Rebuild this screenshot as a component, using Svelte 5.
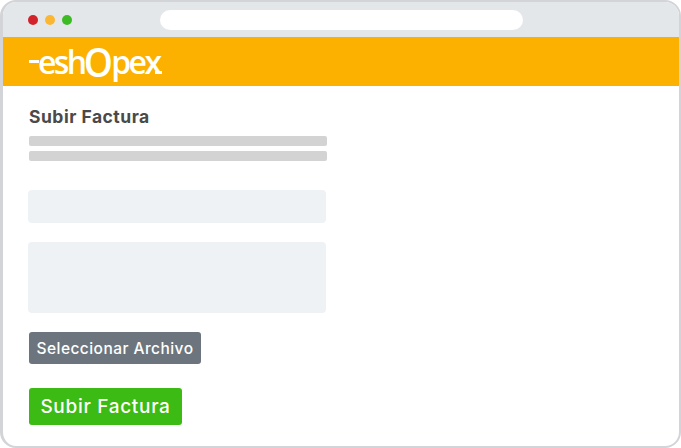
<script>
	const lines = [0, 1];
</script>

<div class="window">
	<div class="chrome">
		<div class="dots">
			<span class="dot red"></span>
			<span class="dot amber"></span>
			<span class="dot green"></span>
		</div>
		<div class="address"></div>
	</div>
	<header class="brand">
		<div class="logo"><span class="dash"></span><span>esh</span><span class="big">O</span><span>pex</span><span class="tail"></span></div>
	</header>
	<main class="content">
		<h1>Subir Factura</h1>
		<div class="lines">
			{#each lines as l}
				<div class="line"></div>
			{/each}
		</div>
		<div class="input"></div>
		<div class="textarea"></div>
		<button class="file">Seleccionar Archivo</button>
		<button class="submit">Subir Factura</button>
	</main>
</div>

<style>
	:global(body) {
		background: #fff;
	}
	.window {
		box-sizing: border-box;
		width: 681px;
		height: 448px;
		border: 2px solid #d2d4d7;
		border-left-width: 3px;
		border-radius: 16px;
		overflow: hidden;
		background: #fff;
		font-family: Inter, "Open Sans", sans-serif;
	}
	.chrome {
		height: 35px;
		background: #e4e7ea;
		display: flex;
		align-items: center;
		padding: 0 0 0 25px;
	}
	.dots {
		display: flex;
		gap: 7px;
		width: 132px;
	}
	.dot {
		width: 10px;
		height: 10px;
		border-radius: 50%;
	}
	.red { background: #d2232a; }
	.amber { background: #fbb732; }
	.green { background: #3dbb25; }
	.address {
		width: 363px;
		height: 20px;
		background: #fff;
		border-radius: 10px;
	}
	.brand {
		height: 49px;
		background: #fcb100;
		padding-left: 26px;
		display: flex;
		align-items: center;
	}
	.logo {
		display: flex;
		align-items: center;
		color: #fff;
		font-family: "Open Sans", sans-serif;
		font-size: 32px;
		font-weight: 600;
		letter-spacing: -2.6px;
		line-height: 1;
	}
	.dash {
		width: 10px;
		height: 3px;
		background: #fff;
		margin-right: -1px;
	}
	.big {
		font-size: 39px;
		font-weight: 600;
		letter-spacing: 0;
		transform: scaleX(0.95);
		margin: 0 -2px 0 -2px;
	}
	.tail {
		width: 7px;
		height: 3px;
		background: #fff;
		align-self: flex-end;
		margin: 0 0 7px -4px;
	}
	.content {
		padding: 21px 0 0 26px;
		display: flex;
		flex-direction: column;
		align-items: flex-start;
	}
	h1 {
		margin: 0;
		font-size: 17.5px;
		line-height: 20px;
		font-weight: 700;
		letter-spacing: 0.5px;
		color: #4a4a4a;
	}
	.lines {
		margin-top: 9px;
		display: flex;
		flex-direction: column;
		gap: 5px;
	}
	.line {
		width: 298px;
		height: 10px;
		background: #d3d3d3;
		border-radius: 2px;
	}
	.input {
		margin: 29px 0 0 -1px;
		width: 298px;
		height: 33px;
		background: #eff2f5;
		border-radius: 4px;
	}
	.textarea {
		margin: 19px 0 0 -1px;
		width: 298px;
		height: 71px;
		background: #eff2f5;
		border-radius: 4px;
	}
	button {
		border: none;
		color: #fff;
		font-family: inherit;
		font-weight: 500;
		padding: 0;
		border-radius: 3px;
	}
	.file {
		margin-top: 19px;
		width: 172px;
		height: 32px;
		background: #6c757d;
		font-size: 15.5px;
		letter-spacing: 0.45px;
	}
	.submit {
		margin-top: 24px;
		width: 153px;
		height: 37px;
		background: #3cbb14;
		font-size: 19px;
		letter-spacing: 0.7px;
	}
</style>
